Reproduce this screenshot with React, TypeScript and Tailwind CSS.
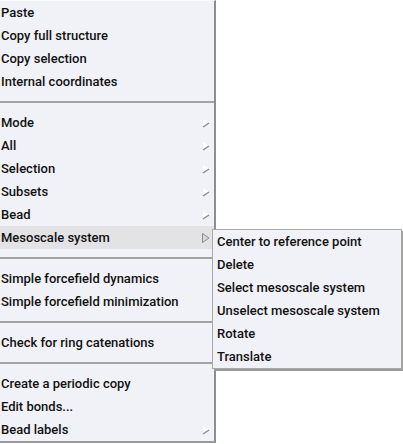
import React from "react";

type Item = { label: string; sub?: boolean; active?: boolean } | "sep";

const MAIN: Item[] = [
  { label: "Paste" },
  { label: "Copy full structure" },
  { label: "Copy selection" },
  { label: "Internal coordinates" },
  "sep",
  { label: "Mode", sub: true },
  { label: "All", sub: true },
  { label: "Selection", sub: true },
  { label: "Subsets", sub: true },
  { label: "Bead", sub: true },
  { label: "Mesoscale system", sub: true, active: true },
  "sep",
  { label: "Simple forcefield dynamics" },
  { label: "Simple forcefield minimization" },
  "sep",
  { label: "Check for ring catenations" },
  "sep",
  { label: "Create a periodic copy" },
  { label: "Edit bonds..." },
  { label: "Bead labels", sub: true },
];

const SUB = [
  "Center to reference point",
  "Delete",
  "Select mesoscale system",
  "Unselect mesoscale system",
  "Rotate",
  "Translate",
];

function Arrow({ active }: { active?: boolean }) {
  if (active) {
    return (
      <svg width="8" height="10" viewBox="0 0 8 10" className="shrink-0">
        <polygon points="0.5,0.5 7,5 0.5,9.5" fill="#d8d8dc" stroke="#8a8a8a" strokeWidth="1" />
      </svg>
    );
  }
  return (
    <svg width="8" height="10" viewBox="0 0 8 10" className="shrink-0">
      <polygon points="1,1 7,5 1,9" fill="#ffffff" />
      <line x1="1" y1="9" x2="7" y2="5" stroke="#8c8c8c" strokeWidth="1.5" />
    </svg>
  );
}

export default function App() {
  return (
    <div
      className="relative h-[444px] w-[403px] overflow-hidden bg-white text-[13px] font-medium text-[#111]"
      style={{ fontFamily: "Roboto, 'Liberation Sans', sans-serif" }}
    >
      <div className="flex w-[216px] flex-col border-t border-t-[#fbfbfd] border-r-2 border-r-[#8e8e8e] border-b-2 border-b-[#9a9a9a] bg-[#f1f2f7]">
        {MAIN.map((it, i) =>
          it === "sep" ? (
            <div key={i} className="flex h-[18px] items-center">
              <div className="h-[2px] w-full bg-[#a3a3a3]" />
            </div>
          ) : (
            <div
              key={i}
              className={`flex h-[23px] items-center justify-between pl-[1px] pr-[4px] ${
                it.active ? "bg-[#e3e3e6]" : ""
              }`}
            >
              <span>{it.label}</span>
              {it.sub && <Arrow active={it.active} />}
            </div>
          )
        )}
      </div>

      <div className="absolute left-[212px] top-[229px] flex w-[190px] flex-col border border-[#a9a9a9] bg-[#f1f2f7] shadow-[2px_2px_0_#9c9c9c]">
        {SUB.map((s) => (
          <div key={s} className="flex h-[23px] items-center pl-[4px]">
            {s}
          </div>
        ))}
      </div>
    </div>
  );
}
